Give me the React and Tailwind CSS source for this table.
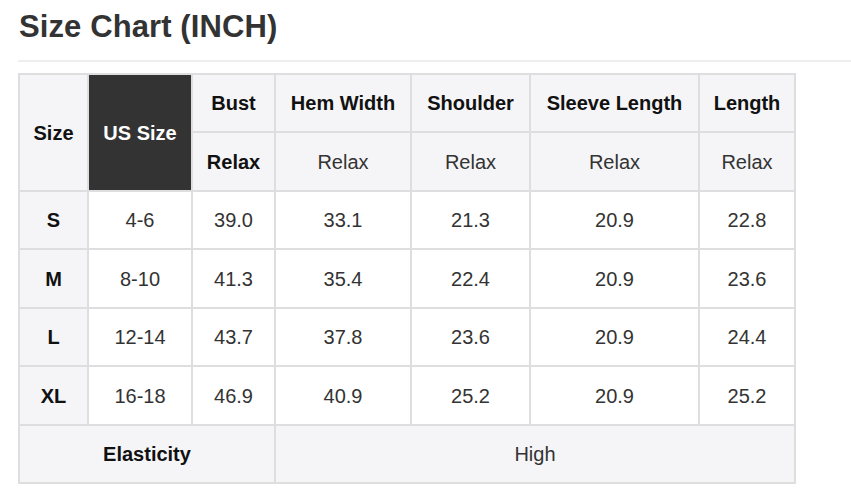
import React from "react";

const sizes = [
  { size: "S", us: "4-6", vals: ["39.0", "33.1", "21.3", "20.9", "22.8"] },
  { size: "M", us: "8-10", vals: ["41.3", "35.4", "22.4", "20.9", "23.6"] },
  { size: "L", us: "12-14", vals: ["43.7", "37.8", "23.6", "20.9", "24.4"] },
  { size: "XL", us: "16-18", vals: ["46.9", "40.9", "25.2", "20.9", "25.2"] },
];

const measures = ["Bust", "Hem Width", "Shoulder", "Sleeve Length", "Length"];

const cell = "border-2 border-[#dedede] text-center align-middle";

export default function App() {
  return (
    <div className="w-[851px] h-[496px] bg-white font-['Liberation_Sans',Arial,sans-serif] overflow-hidden">
      <h1 className="pl-[19px] pt-[7px] text-[31px] leading-[40px] font-bold text-[#333] tracking-[0.1px]">Size Chart (INCH)</h1>
      <div className="ml-[18px] mt-[13px] h-[2px] bg-[#eeeeee]" />
      <table className="ml-[18px] mt-[11px] table-fixed border-collapse text-[20px] text-[#333] w-[776px]">
        <colgroup>
          <col className="w-[69px]" />
          <col className="w-[104px]" />
          <col className="w-[83px]" />
          <col className="w-[136px]" />
          <col className="w-[119px]" />
          <col className="w-[169px]" />
          <col className="w-[96px]" />
        </colgroup>
        <thead>
          <tr className="h-[58px]">
            <th rowSpan={2} className={`${cell} bg-[#f5f5f7] text-[#111] font-bold`}>Size</th>
            <th rowSpan={2} className={`${cell} bg-[#333333] border-[#333333] text-white font-bold`}>US Size</th>
            {measures.map((m) => (
              <th key={m} className={`${cell} bg-[#f5f5f7] text-[#111] font-bold whitespace-nowrap`}>{m}</th>
            ))}
          </tr>
          <tr className="h-[59px]">
            <th className={`${cell} bg-[#f5f5f7] text-[#111] font-bold`}>Relax</th>
            {measures.slice(1).map((m) => (
              <td key={m} className={`${cell} bg-[#f5f5f7]`}>Relax</td>
            ))}
          </tr>
        </thead>
        <tbody>
          {sizes.map((r, i) => (
            <tr key={r.size} className={i % 2 === 0 ? "h-[58px]" : "h-[59px]"}>
              <td className={`${cell} bg-[#f5f5f7] text-[#111] font-bold`}>{r.size}</td>
              <td className={`${cell} bg-white`}>{r.us}</td>
              {r.vals.map((v, j) => (
                <td key={j} className={`${cell} bg-white`}>{v}</td>
              ))}
            </tr>
          ))}
          <tr className="h-[58px]">
            <td colSpan={3} className={`${cell} bg-[#f5f5f7] text-[#111] font-bold`}>Elasticity</td>
            <td colSpan={4} className={`${cell} bg-[#f5f5f7]`}>High</td>
          </tr>
        </tbody>
      </table>
    </div>
  );
}
